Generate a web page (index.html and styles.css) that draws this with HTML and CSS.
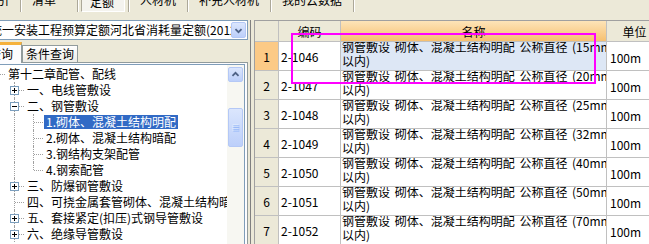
FILE: index.html
```html
<!DOCTYPE html>
<html lang="zh-CN">
<head>
    <meta charset="UTF-8">
    <title>定额查询</title>
    <link rel="stylesheet" href="styles.css">
</head>
<body>
    <div class="topbar">
        <div class="tb-item first"><span>索引</span></div>
        <div class="tb-item wide"><span>清单</span></div>
        <div class="tb-item active"><span>定额</span></div>
        <div class="tb-item"><span>人材机</span></div>
        <div class="tb-item"><span>补充人材机</span></div>
        <div class="tb-item"><span>我的云数据</span></div>
    </div>

    <div class="main">
        <!-- 左侧：定额库 + 章节树 -->
        <div class="left">
            <div class="combo">
                <span class="combo-text">统一安装工程预算定额河北省消耗量定额(2012)</span>
                <span class="xp-btn combo-btn">
                    <svg width="15" height="15" viewBox="0 0 15 15"><path d="M4 6l3.5 3.5L11 6" fill="none" stroke="#4d6185" stroke-width="2"/></svg>
                </span>
            </div>
            <div class="tabs">
                <div class="tab active">查询</div>
                <div class="tab">条件查询</div>
            </div>
            <div class="pane">
                <div class="tree">
                    <div class="tree-rows">
                        <div class="node">
                            <span class="conn"><svg class="box" width="9" height="9" viewBox="0 0 9 9"><rect x=".5" y=".5" width="8" height="8" fill="#fff" stroke="#7b9ebd"/><path d="M2 4.5h5" stroke="#000"/></svg></span>
                            <span class="label">第十二章配管、配线</span>
                        </div>
                        <div class="node">
                            <span class="ind"></span>
                            <span class="conn"><svg class="box" width="9" height="9" viewBox="0 0 9 9"><rect x=".5" y=".5" width="8" height="8" fill="#fff" stroke="#7b9ebd"/><path d="M2 4.5h5M4.5 2v5" stroke="#000"/></svg></span>
                            <span class="label">一、电线管敷设</span>
                        </div>
                        <div class="node">
                            <span class="ind"></span>
                            <span class="conn"><svg class="box" width="9" height="9" viewBox="0 0 9 9"><rect x=".5" y=".5" width="8" height="8" fill="#fff" stroke="#7b9ebd"/><path d="M2 4.5h5" stroke="#000"/></svg></span>
                            <span class="label">二、钢管敷设</span>
                        </div>
                        <div class="node">
                            <span class="ind"></span><span class="ind line"></span><span class="conn"></span>
                            <span class="label selected">1.砌体、混凝土结构明配</span>
                        </div>
                        <div class="node">
                            <span class="ind"></span><span class="ind line"></span><span class="conn"></span>
                            <span class="label">2.砌体、混凝土结构暗配</span>
                        </div>
                        <div class="node">
                            <span class="ind"></span><span class="ind line"></span><span class="conn"></span>
                            <span class="label">3.钢结构支架配管</span>
                        </div>
                        <div class="node">
                            <span class="ind"></span><span class="ind line"></span><span class="conn last"></span>
                            <span class="label">4.钢索配管</span>
                        </div>
                        <div class="node">
                            <span class="ind"></span>
                            <span class="conn"><svg class="box" width="9" height="9" viewBox="0 0 9 9"><rect x=".5" y=".5" width="8" height="8" fill="#fff" stroke="#7b9ebd"/><path d="M2 4.5h5M4.5 2v5" stroke="#000"/></svg></span>
                            <span class="label">三、防爆钢管敷设</span>
                        </div>
                        <div class="node">
                            <span class="ind"></span><span class="conn"></span>
                            <span class="label">四、可挠金属套管砌体、混凝土结构暗配</span>
                        </div>
                        <div class="node">
                            <span class="ind"></span>
                            <span class="conn"><svg class="box" width="9" height="9" viewBox="0 0 9 9"><rect x=".5" y=".5" width="8" height="8" fill="#fff" stroke="#7b9ebd"/><path d="M2 4.5h5M4.5 2v5" stroke="#000"/></svg></span>
                            <span class="label">五、套接紧定(扣压)式钢导管敷设</span>
                        </div>
                        <div class="node">
                            <span class="ind"></span>
                            <span class="conn"><svg class="box" width="9" height="9" viewBox="0 0 9 9"><rect x=".5" y=".5" width="8" height="8" fill="#fff" stroke="#7b9ebd"/><path d="M2 4.5h5M4.5 2v5" stroke="#000"/></svg></span>
                            <span class="label">六、绝缘导管敷设</span>
                        </div>
                    </div>
                    <div class="vscroll">
                        <span class="xp-btn sb-btn">
                            <svg width="15" height="15" viewBox="0 0 15 15"><path d="M4 9l3.5-3.5L11 9" fill="none" stroke="#4d6185" stroke-width="2"/></svg>
                        </span>
                        <span class="xp-btn sb-thumb">
                            <svg width="15" height="8" viewBox="0 0 15 8"><path d="M4 .5h7M4 2.5h7M4 4.5h7M4 6.5h7" stroke="#eef4fe"/><path d="M5 1.5h7M5 3.5h7M5 5.5h7M5 7.5h7" stroke="#8cb0f8"/></svg>
                        </span>
                    </div>
                </div>
            </div>
        </div>

        <!-- 右侧：定额列表 -->
        <div class="right">
            <div class="grid">
                <div class="grid-row grid-head">
                    <div class="cell"></div>
                    <div class="cell center">编码</div>
                    <div class="cell center sorted">名称</div>
                    <div class="cell center">单位</div>
                </div>
                <div class="grid-row current">
                    <div class="cell num">1</div>
                    <div class="cell code">2-1046</div>
                    <div class="cell name"><div>钢管敷设 砌体、混凝土结构明配 公称直径 (15mm<br>以内)</div></div>
                    <div class="cell unit">100m</div>
                </div>
                <div class="grid-row">
                    <div class="cell num">2</div>
                    <div class="cell code">2-1047</div>
                    <div class="cell name"><div>钢管敷设 砌体、混凝土结构明配 公称直径 (20mm<br>以内)</div></div>
                    <div class="cell unit">100m</div>
                </div>
                <div class="grid-row">
                    <div class="cell num">3</div>
                    <div class="cell code">2-1048</div>
                    <div class="cell name"><div>钢管敷设 砌体、混凝土结构明配 公称直径 (25mm<br>以内)</div></div>
                    <div class="cell unit">100m</div>
                </div>
                <div class="grid-row">
                    <div class="cell num">4</div>
                    <div class="cell code">2-1049</div>
                    <div class="cell name"><div>钢管敷设 砌体、混凝土结构明配 公称直径 (32mm<br>以内)</div></div>
                    <div class="cell unit">100m</div>
                </div>
                <div class="grid-row">
                    <div class="cell num">5</div>
                    <div class="cell code">2-1050</div>
                    <div class="cell name"><div>钢管敷设 砌体、混凝土结构明配 公称直径 (40mm<br>以内)</div></div>
                    <div class="cell unit">100m</div>
                </div>
                <div class="grid-row">
                    <div class="cell num">6</div>
                    <div class="cell code">2-1051</div>
                    <div class="cell name"><div>钢管敷设 砌体、混凝土结构明配 公称直径 (50mm<br>以内)</div></div>
                    <div class="cell unit">100m</div>
                </div>
                <div class="grid-row">
                    <div class="cell num">7</div>
                    <div class="cell code">2-1052</div>
                    <div class="cell name"><div>钢管敷设 砌体、混凝土结构明配 公称直径 (70mm<br>以内)</div></div>
                    <div class="cell unit">100m</div>
                </div>
            </div>
            <div class="mark"></div>
        </div>
    </div>
</body>
</html>
```

FILE: styles.css
```css
body {
    margin: 0;
    width: 649px;
    height: 244px;
    overflow: hidden;
    background-color: #ece9d8;
    font-family: "Noto Sans CJK SC", sans-serif;
    font-size: 12px;
    color: #000;
}

/* 顶部页签 */
.topbar {
    display: flex;
    height: 12px;
    overflow: hidden;
}
.tb-item {
    padding: 0 3px;
    border-right: 1px solid #aca899;
    box-shadow: 1px 0 0 #fff;
    white-space: nowrap;
}
.tb-item span {
    display: block;
    height: 19px;
    margin-top: -7px;
    padding: 0 8px;
    line-height: 14px;
    box-sizing: border-box;
}
.tb-item.first {
    margin-left: -26px;
}
.tb-item.wide span {
    padding-right: 18px;
}
.tb-item.active span {
    border: 1px solid;
    border-color: #aca899 #fff #fff #aca899;
    background-color: #f4f3ee;
    padding: 2px 10px 0 8px;
    line-height: 12px;
}

.main {
    display: flex;
}

/* 左侧 */
.left {
    flex: none;
    width: 260px;
    margin-left: -12px;
    padding-top: 8px;
}
.combo {
    display: flex;
    height: 20px;
    padding: 1px;
    border: 1px solid #7f9db9;
    background: white;
    box-sizing: border-box;
}
.combo-text {
    flex: 1;
    overflow: hidden;
    white-space: nowrap;
    line-height: 16px;
}
.xp-btn {
    display: flex;
    align-items: center;
    justify-content: center;
    border: 1px solid #b4c8f6;
    border-radius: 2px;
    background: linear-gradient(#dbe6fd, #bccffa);
    box-sizing: border-box;
}
.combo-btn {
    width: 15px;
    height: 16px;
}

.tabs {
    display: flex;
    align-items: flex-end;
    height: 20px;
    margin-top: 2px;
}
.tab {
    height: 17px;
    padding: 0 3px;
    border: 1px solid #919b9c;
    border-bottom: none;
    background: linear-gradient(#ffffff, #ecebe5);
    line-height: 16px;
    box-sizing: border-box;
}
.tab.active {
    position: relative;
    z-index: 1;
    height: 21px;
    margin-bottom: -1px;
    padding: 0 8px 0 0;
    border-top: 3px solid #f5b13c;
    background: #fcfcfe;
    line-height: 17px;
}

.pane {
    padding: 1px 2px;
    border: 1px solid #919b9c;
    background: #fcfcfe;
}
.tree {
    display: flex;
    height: 200px;
    border: 1px solid #7f9db9;
    background: white;
}
.tree-rows {
    flex: 1;
    margin-left: -6px;
    padding-top: 1px;
    overflow: hidden;
}
.node {
    display: flex;
    align-items: center;
    height: 16px;
    white-space: nowrap;
}
.ind, .conn {
    flex: none;
    position: relative;
    display: flex;
    align-items: center;
    width: 19px;
    height: 16px;
}
.ind.line::before, .conn::before {
    content: "";
    position: absolute;
    left: 9px;
    top: 0;
    bottom: 0;
    border-left: 1px dotted #a0a0a0;
}
.conn.last::before {
    bottom: 8px;
}
.conn::after {
    content: "";
    position: absolute;
    left: 10px;
    right: 0;
    top: 8px;
    border-top: 1px dotted #a0a0a0;
}
.box {
    position: relative;
    z-index: 1;
    margin-left: 5px;
    margin-top: 1px;
}
.label {
    height: 14px;
    margin-left: 1px;
    padding: 0 2px;
    line-height: 14px;
}
.label.selected {
    background-color: #316ac5;
    color: white;
}

.vscroll {
    flex: none;
    width: 17px;
    padding: 2px 1px 0;
    background: #f7f7f2;
    box-sizing: border-box;
}
.sb-btn {
    width: 15px;
    height: 15px;
}
.sb-thumb {
    width: 15px;
    height: 39px;
    margin-top: 26px;
}

/* 右侧定额表 */
.right {
    flex: 1;
    position: relative;
    margin: 8px 0 0 2px;
    padding-left: 3px;
    border-left: 1px solid #808080;
    height: 224px;
    overflow: hidden;
}
.grid {
    border-left: 1px solid #a0a0a0;
    border-top: 1px solid #a0a0a0;
}
.grid-row {
    display: grid;
    grid-template-columns: 24px 62px 266px 56px;
    height: 29px;
}
.grid-head {
    height: 21px;
}
.cell {
    display: flex;
    align-items: center;
    border-right: 1px solid #c0c0c0;
    border-bottom: 1px solid #c0c0c0;
    background: white;
    white-space: nowrap;
    overflow: hidden;
    box-sizing: border-box;
}
.grid-head .cell {
    background-color: #ece9d8;
}
.grid-head .cell.sorted {
    background: linear-gradient(#fde4b8, #f6c070);
}
.center {
    justify-content: center;
}
.num {
    justify-content: center;
    background-color: #ece9d8;
}
.current .num {
    background-color: #fcca86;
}
.code {
    padding-left: 2px;
}
.name {
    align-items: flex-start;
    padding-left: 1px;
    line-height: 14px;
    word-spacing: 2px;
}
.name div {
    margin-top: -2px;
}
.current .name {
    background-color: #dde7f5;
}
.unit {
    padding: 2px 0 0 3px;
}

.mark {
    position: absolute;
    left: 40px;
    top: 13px;
    width: 305px;
    height: 51px;
    border: 2px solid #f0f;
    box-sizing: border-box;
}
```
